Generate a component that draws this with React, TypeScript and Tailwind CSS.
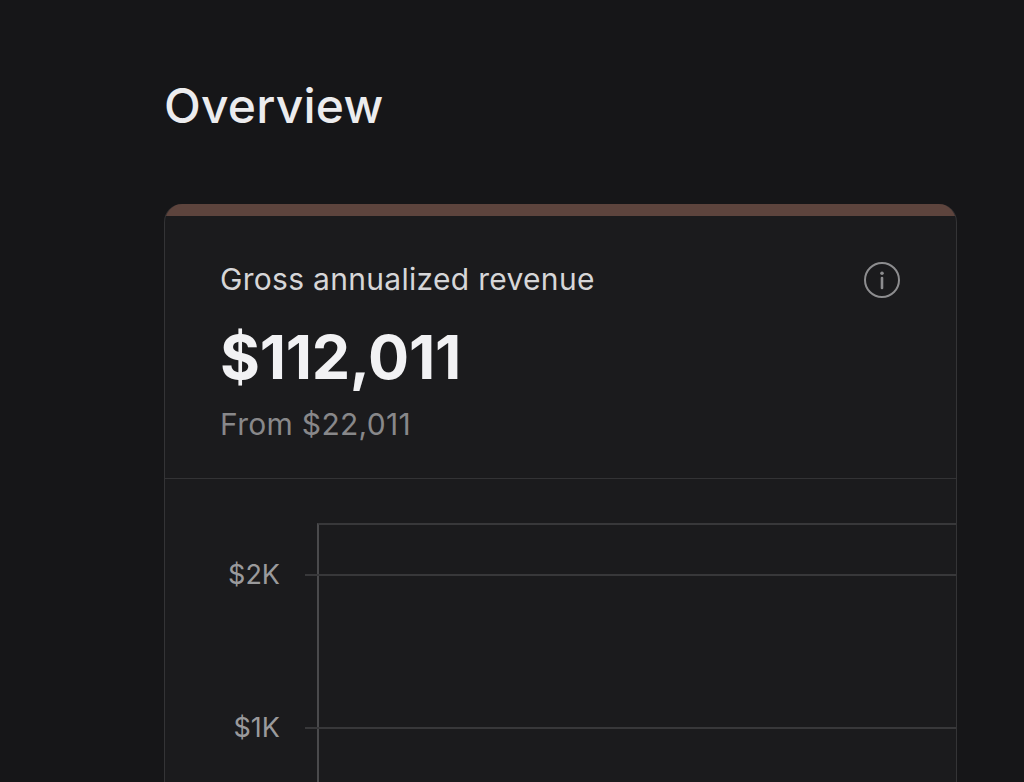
import React from "react";

function InfoIcon() {
  return (
    <svg width="38" height="38" viewBox="0 0 38 38" fill="none">
      <circle cx="19" cy="19" r="17" stroke="#8d8d8f" strokeWidth="2" />
      <circle cx="19" cy="12.2" r="1.8" fill="#8d8d8f" />
      <line x1="19" y1="17" x2="19" y2="27" stroke="#8d8d8f" strokeWidth="2.6" strokeLinecap="round" />
    </svg>
  );
}

export default function App() {
  return (
    <div
      className="flex h-screen w-full flex-col overflow-hidden bg-[#161618] pl-[164px] pr-[67px] pt-[78px]"
      style={{ fontFamily: "Inter, 'Noto Sans', sans-serif" }}
    >
      <h1 className="text-[48px] leading-[56px] font-medium tracking-[0.2px] text-[#ececee]">Overview</h1>
      <div className="mt-[70px] flex min-h-0 flex-1 flex-col overflow-hidden rounded-t-[18px] border-x border-[#343436] bg-[#1b1b1d]">
        <div className="h-[12px] shrink-0 bg-[#5d443d]" />
        <div className="flex items-start justify-between px-[55px] pt-[45px]">
          <div className="flex flex-col">
            <div className="text-[30px] leading-[36px] tracking-[0.3px] text-[#d6d6d8]">Gross annualized revenue</div>
            <div className="mt-[24px] text-[61px] leading-[72px] font-bold tracking-[-0.3px] text-[#f2f2f4]">$112,011</div>
            <div className="mt-[13px] text-[30px] leading-[36px] tracking-[0.3px] text-[#88888a]">From $22,011</div>
          </div>
          <div>
            <InfoIcon />
          </div>
        </div>
        <div className="mt-[36px] h-px shrink-0 bg-[#333335]" />
        <div className="flex flex-1 pt-[44px]">
          <div className="flex w-[152px] shrink-0 flex-col items-end gap-[123px] pr-[37px] pt-[37px] text-[27px] leading-[30px] text-[#9a9a9c]">
            <div>$2K</div>
            <div>$1K</div>
          </div>
          <div className="flex flex-1 flex-col border-l-2 border-t-2 border-l-[#4a4a4c] border-t-[#38383a]">
            <div className="ml-[-14px] mt-[49px] h-[2px] bg-[#38383a]" />
            <div className="ml-[-14px] mt-[151px] h-[2px] bg-[#38383a]" />
          </div>
        </div>
      </div>
    </div>
  );
}
